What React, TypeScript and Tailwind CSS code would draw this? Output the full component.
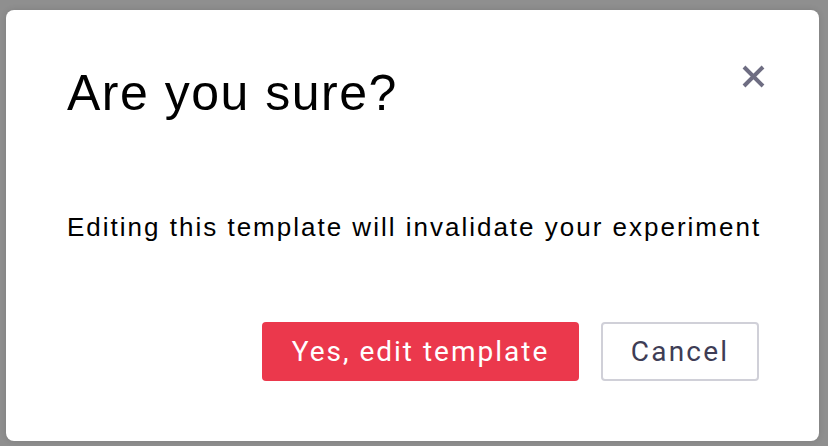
import React from 'react';

const CloseIcon: React.FC = () => (
  <svg width="23" height="23" viewBox="0 0 23 23" fill="none">
    <path d="M2 2L21 21M21 2L2 21" stroke="#6e6d82" strokeWidth="4" strokeLinecap="butt" />
  </svg>
);

const App: React.FC = () => {
  return (
    <div className="h-[446px] w-[828px] bg-[#8f8f8f] pl-[6px] pt-[10px]">
      <div
        className="flex h-[431px] w-[813px] flex-col rounded-[8px] bg-white px-[60px] pb-[60px] pt-[53px] shadow-[0_0_6px_rgba(0,0,0,0.12)]"
        style={{ fontFamily: '"Liberation Sans", Arial, sans-serif' }}
      >
        {/* Header */}
        <div className="flex items-start justify-between">
          <h2 className="ml-px text-[50px] font-normal leading-[60px] tracking-[1.5px] text-black">
            Are you sure?
          </h2>
          <button className="-mr-[6px] mt-[2px]">
            <CloseIcon />
          </button>
        </div>

        {/* Body */}
        <p className="ml-px mt-[88px] whitespace-nowrap text-[26px] leading-[32px] tracking-[2px] text-black">
          Editing this template will invalidate your experiment
        </p>

        {/* Actions */}
        <div className="mt-auto flex justify-end gap-[22px]">
          <button
            className="flex h-[59px] w-[317px] items-center justify-center rounded-[4px] bg-[#eb384c] text-[28px] tracking-[2px] text-white"
            style={{ fontFamily: 'Roboto, "Liberation Sans", sans-serif' }}
          >
            Yes, edit template
          </button>
          <button
            className="flex h-[59px] w-[158px] items-center justify-center rounded-[4px] border-2 border-[#d0d0d8] bg-white text-[28px] tracking-[2.2px] text-[#3e3d55]"
            style={{ fontFamily: 'Roboto, "Liberation Sans", sans-serif' }}
          >
            Cancel
          </button>
        </div>
      </div>
    </div>
  );
};

export default App;
